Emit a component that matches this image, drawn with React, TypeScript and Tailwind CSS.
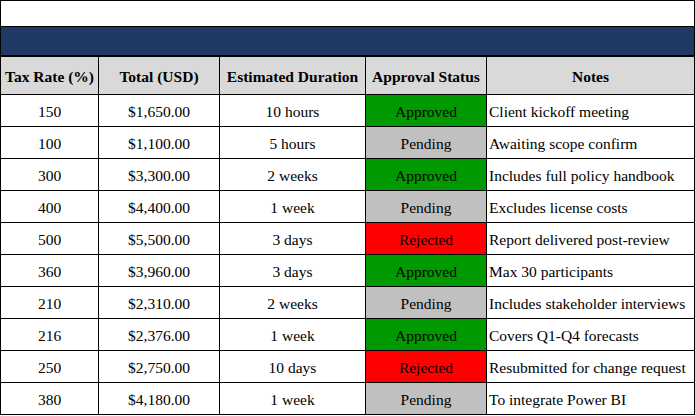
const rows = [
  { rate: '150', total: '$1,650.00', duration: '10 hours', status: 'Approved', notes: 'Client kickoff meeting' },
  { rate: '100', total: '$1,100.00', duration: '5 hours', status: 'Pending', notes: 'Awaiting scope confirm' },
  { rate: '300', total: '$3,300.00', duration: '2 weeks', status: 'Approved', notes: 'Includes full policy handbook' },
  { rate: '400', total: '$4,400.00', duration: '1 week', status: 'Pending', notes: 'Excludes license costs' },
  { rate: '500', total: '$5,500.00', duration: '3 days', status: 'Rejected', notes: 'Report delivered post-review' },
  { rate: '360', total: '$3,960.00', duration: '3 days', status: 'Approved', notes: 'Max 30 participants' },
  { rate: '210', total: '$2,310.00', duration: '2 weeks', status: 'Pending', notes: 'Includes stakeholder interviews' },
  { rate: '216', total: '$2,376.00', duration: '1 week', status: 'Approved', notes: 'Covers Q1-Q4 forecasts' },
  { rate: '250', total: '$2,750.00', duration: '10 days', status: 'Rejected', notes: 'Resubmitted for change request' },
  { rate: '380', total: '$4,180.00', duration: '1 week', status: 'Pending', notes: 'To integrate Power BI' },
];

const statusStyle: Record<string, string> = {
  Approved: 'bg-[#009900]',
  Pending: 'bg-[#c0c0c0]',
  Rejected: 'bg-[#ff0000]',
};

const gridCols = 'grid grid-cols-[98px_121px_146px_121px_1fr]';
const cell = 'flex items-center justify-center pt-[2px] border-r border-black';

export default function App() {
  return (
    <div
      className="w-[695px] h-[416px] overflow-hidden bg-white text-[15.5px] text-black"
      style={{ fontFamily: '"Liberation Serif", serif' }}
    >
      <div className="border-x border-t border-black">
        <div className="h-[26px] border-b border-black" />
        <div className="h-[30px] border-b-2 border-black bg-[#203864]" />
        <div className={`${gridCols} h-[38px] border-b border-black bg-[#d9d9d9] font-bold`}>
          <div className={cell}>Tax Rate (%)</div>
          <div className={cell}>Total (USD)</div>
          <div className={cell}>Estimated Duration</div>
          <div className={cell}>Approval Status</div>
          <div className="flex items-center justify-center pt-[2px]">Notes</div>
        </div>
        {rows.map((r) => (
          <div key={r.rate + r.notes} className={`${gridCols} h-[32px] border-b border-black`}>
            <div className={cell}>{r.rate}</div>
            <div className={cell}>{r.total}</div>
            <div className={cell}>{r.duration}</div>
            <div className={`${cell} ${statusStyle[r.status]}`}>{r.status}</div>
            <div className="flex items-center pl-[2px] pt-[2px] whitespace-nowrap">{r.notes}</div>
          </div>
        ))}
      </div>
    </div>
  );
}
